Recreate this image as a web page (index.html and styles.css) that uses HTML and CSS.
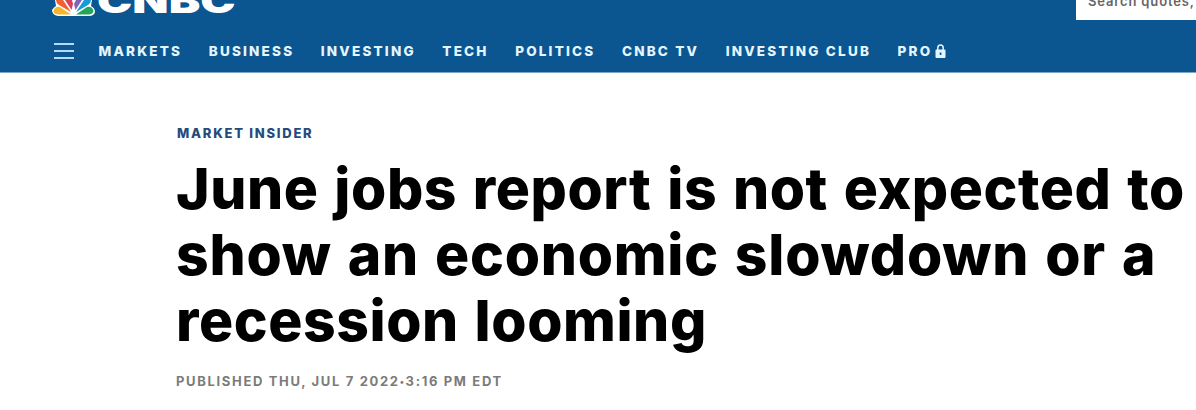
FILE: index.html
```html
<!DOCTYPE html>
<html lang="en">
<head>
<meta charset="utf-8">
<title>June jobs report</title>
<link rel="stylesheet" href="styles.css">
</head>
<body>
<header class="header">
  <div class="top">
    <div class="brand">
      <svg class="peacock" width="43" height="16" viewBox="0 0 43 16">
        <path fill="#fff" d="M0 10Q2 7 4 6L3 0H40L39 6Q43 8 43 12Q42 16 37 16H6Q0 15 0 10Z"/>
        <path fill="#f9b52a" d="M1.5 11Q3 6 8 7L19 14.5H6Q1.5 14 1.5 11Z"/>
        <path fill="#ef6033" d="M4 0H11L19 12L7 5Q4 3 4 0Z"/>
        <path fill="#d9405a" d="M13 0H20L21 4L19.5 10Z"/>
        <path fill="#8065b5" d="M24 0H30L23.5 10L22 4Z"/>
        <path fill="#159bd8" d="M32 0H39Q39 3 36 5L24 12Z"/>
        <path fill="#22a65a" d="M24 14.5L35 7Q40 6 41.5 11Q41 14 37 14.5Z"/>
      </svg>
      <span class="wordmark">CNBC</span>
    </div>
    <div class="search">Search quotes,</div>
  </div>
  <nav class="nav">
    <svg class="menu" width="20" height="18" viewBox="0 0 20 18"><path d="M0 2H20M0 9H20M0 16H20" stroke="#b5dcf5" stroke-width="2"/></svg>
    <a>MARKETS</a><a>BUSINESS</a><a>INVESTING</a><a>TECH</a><a>POLITICS</a><a>CNBC TV</a><a>INVESTING CLUB</a><a class="pro">PRO<svg width="11" height="14" viewBox="0 0 11 14"><path d="M2.8 6V4Q2.8 1 5.5 1T8.200 4V6" fill="none" stroke="#e4f5fd" stroke-width="1.500"/><rect x=".5" y="5.500" width="10" height="8.500" rx="1" fill="#e4f5fd"/><rect x="4.700" y="8.500" width="1.700" height="2.500" fill="#0b5591"/></svg></a>
  </nav>
</header>
<main class="article">
  <div class="kicker">MARKET INSIDER</div>
  <h1><span class="line">June jobs report is not expected to</span><span class="line middle">show an economic slowdown or a</span><span class="line">recession looming</span></h1>
  <div class="date">PUBLISHED THU, JUL 7 2022<span class="dot">•</span>3:16 PM EDT</div>
</main>
</body>
</html>
```
FILE: styles.css
```css
body { margin: 0; background: #fff; font-family: Inter, sans-serif; overflow: hidden; }
.header { background: #0b5591; height: 72px; border-bottom: 1px solid #7fa6c6; }
.top { height: 40px; display: flex; justify-content: space-between; align-items: flex-start; padding-left: 52px; }
.brand { display: flex; align-items: flex-start; }
.wordmark { margin: -18px 0 0 2px; font-size: 34px; line-height: 38px; font-weight: 900; color: #fff; transform: scaleX(1.39); transform-origin: left; }
.search { box-sizing: border-box; width: 120px; height: 20px; padding-left: 12px; background: #fff; color: #666; font-size: 13px; line-height: 3px; font-weight: 600; letter-spacing: .85px; white-space: nowrap; }
.nav { display: flex; align-items: center; gap: 26.5px; padding-left: 54px; height: 22px; font-size: 13.5px; font-weight: 800; color: #e4f5fd; letter-spacing: 2.2px; }
.menu { margin-right: -2px; }
.pro { display: flex; align-items: center; gap: 3px; }
.article { padding: 52px 0 0 177px; white-space: nowrap; }
.kicker { font-size: 13px; line-height: 16px; font-weight: 800; color: #234b7c; letter-spacing: 1.75px; }
h1 { margin: 15px 0 18px -1px; font-size: 57px; line-height: 66px; font-weight: 800; letter-spacing: .56px; word-spacing: 2.8px; }
.line { display: block; }
.middle { letter-spacing: .75px; }
.date { margin-left: -1px; font-size: 13px; line-height: 18px; font-weight: 700; color: #7b7b7b; letter-spacing: 1.66px; }
.dot { font-size: 9px; vertical-align: 1px; }
```
